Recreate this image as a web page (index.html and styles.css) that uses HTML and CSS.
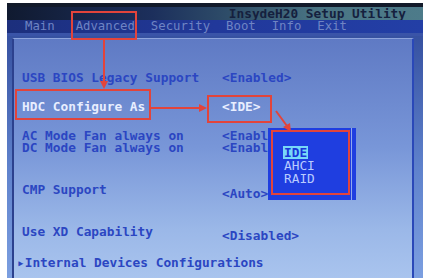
FILE: index.html
```html
<!DOCTYPE html>
<html lang="en">
<head>
    <meta charset="UTF-8">
    <meta name="viewport" content="width=device-width, initial-scale=1.0">
    <title>InsydeH20 Setup Utility</title>
    <link rel="stylesheet" href="styles.css">
</head>
<body>
    <div class="screen">
        <div class="titlebar">
            <span class="title">InsydeH20 Setup Utility</span>
        </div>
        <nav class="menubar">
            <span class="menu first">Main</span>
            <span class="menu">Advanced</span>
            <span class="menu">Security</span>
            <span class="menu">Boot</span>
            <span class="menu">Info</span>
            <span class="menu">Exit</span>
        </nav>
        <div class="frame">
            <div class="row">
                <span class="label">USB BIOS Legacy Support</span>
                <span class="value">&lt;Enabled&gt;</span>
            </div>
            <div class="row gap selected">
                <span class="label">HDC Configure As</span>
                <span class="value">&lt;IDE&gt;</span>
            </div>
            <div class="row gap">
                <span class="label">AC Mode Fan always on</span>
                <span class="value">&lt;Enabled&gt;</span>
            </div>
            <div class="row">
                <span class="label">DC Mode Fan always on</span>
                <span class="value">&lt;Enabled&gt;</span>
            </div>
            <div class="row wide">
                <span class="label">CMP Support</span>
                <span class="value low">&lt;Auto&gt;</span>
            </div>
            <div class="row mid">
                <span class="label">Use XD Capability</span>
                <span class="value low">&lt;Disabled&gt;</span>
            </div>
            <div class="row last">
                <span class="label sub">&#9656;Internal Devices Configurations</span>
            </div>
        </div>
    </div>

    <!-- drop-down list opened over the value column -->
    <div class="popup">
        <div class="option active">IDE</div>
        <div class="option">AHCI</div>
        <div class="option">RAID</div>
    </div>

    <!-- red marks drawn over the photo -->
    <svg class="marks" width="423" height="278" viewBox="0 0 423 278">
        <g fill="none" stroke="#e2443b" stroke-width="2">
            <rect x="72" y="12" width="64" height="27"/>
            <rect x="16" y="90" width="134" height="29"/>
            <rect x="208" y="96" width="63" height="26"/>
            <rect x="272" y="131" width="77" height="63"/>
            <line x1="104" y1="40" x2="104" y2="82"/>
            <line x1="151" y1="108" x2="200" y2="108"/>
            <line x1="276" y1="111" x2="287" y2="126"/>
        </g>
        <g fill="#e2443b">
            <polygon points="100,81 108,81 104,89"/>
            <polygon points="199,104 199,112 207,108"/>
            <polygon points="283,127 290,123 291,132"/>
        </g>
    </svg>
</body>
</html>
```

FILE: styles.css
```css
body {
    margin: 0;
    padding: 0;
    background-color: #fff;
    font-family: "DejaVu Sans Mono", "Liberation Mono", monospace;
    font-weight: bold;
    font-size: 12.8px;
}

.screen {
    display: flex;
    flex-direction: column;
    width: 416px;
    height: 275px;
    margin: 3px 0 0 7px;
    background: linear-gradient(#2c4596, #5f82cc 60%, #7c9fe0);
    overflow: hidden;
}

.titlebar {
    display: flex;
    justify-content: flex-end;
    height: 17px;
    padding-right: 17px;
    background: linear-gradient(90deg, #101a30 0%, #1c2f5c 35%, #30506a 55%, #4a7584 75%, #4d7b8a 100%);
    border-top: 4px solid #121a2a;
    box-sizing: border-box;
}

.title {
    line-height: 13px;
    color: #15203e;
}

.menubar {
    display: flex;
    gap: 16px;
    height: 13px;
    padding-left: 18px;
    line-height: 12px;
    font-size: 12.3px;
    background: linear-gradient(90deg, #1c2f7c, #21389a 50%, #233fa6);
    border-bottom: 3px solid #3a54a8;
}

.menu {
    color: #6f84c4;
    font-weight: normal;
}

.menu.first {
    margin-right: 5px;
}

.frame {
    flex: 1;
    display: flex;
    flex-direction: column;
    margin: 2px 9px 0 5px;
    padding: 33px 0 0 8px;
    border-top: 1px solid #8ea4dc;
    border-left: 2px solid #2c418e;
    border-right: 2px solid #2a48b8;
    background: linear-gradient(#5f7ac4, #7896d8 45%, #9bb8e8 80%, #a9c4ee);
}

.row {
    display: flex;
    line-height: 12px;
    color: #2b46c2;
}

.row.gap {
    margin-top: 17px;
}

.row.wide {
    margin-top: 30px;
}

.row.mid {
    margin-top: 26px;
}

.row.last {
    margin-top: 15px;
}

.label {
    width: 200px;
    white-space: nowrap;
}

.label.sub {
    margin-left: -5px;
}

.value {
    white-space: nowrap;
}

.value.low {
    padding-top: 4px;
}

.selected {
    color: #e8eeff;
}

.popup {
    position: absolute;
    left: 268px;
    top: 128px;
    width: 88px;
    height: 72px;
    padding: 18px 0 0 16px;
    box-sizing: border-box;
    background-color: #1f3ee0;
    box-shadow: inset -4px 0 0 #1f3ee0, inset -5px 0 0 #8fa8f0;
}

.option {
    line-height: 13px;
    color: #b9ccff;
    font-weight: normal;
    width: max-content;
}

.option.active {
    padding: 0 1px;
    margin-left: -1px;
    background-color: #78d8f8;
    color: #1b34d8;
    font-weight: bold;
}

.marks {
    position: absolute;
    left: 0;
    top: 0;
}
```
